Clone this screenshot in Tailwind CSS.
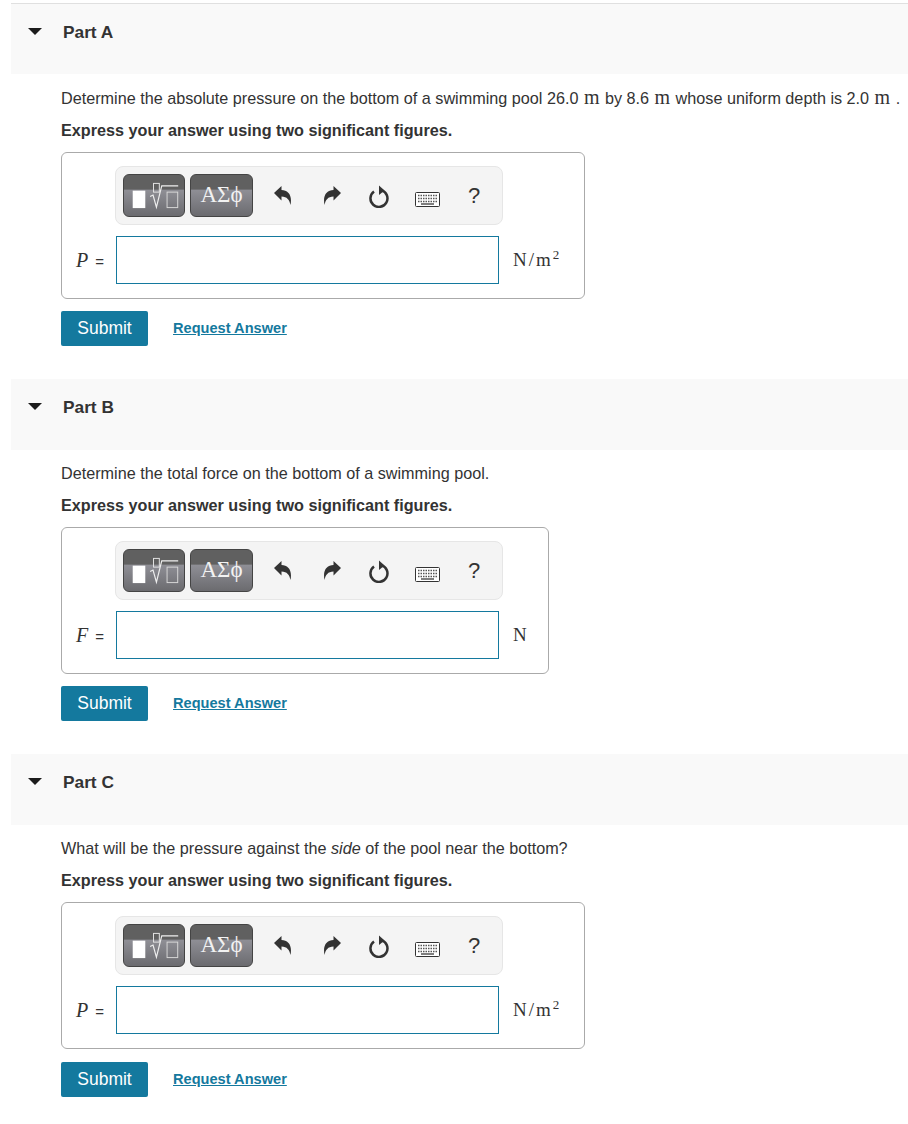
<!DOCTYPE html>
<html lang="en">

<head>
    <meta charset="UTF-8">
    <meta name="viewport" content="width=device-width, initial-scale=1.0">
    <title>Parts</title>
    <script src="https://cdn.jsdelivr.net/npm/@tailwindcss/browser@4"></script>
</head>

<body class="bg-white font-['Liberation_Sans',Arial,sans-serif] text-[#333] text-[16.2px] h-[1124px] overflow-hidden">
    <!-- shared toolbar icons -->
    <svg class="hidden" xmlns="http://www.w3.org/2000/svg">
        <symbol id="templates" viewBox="0 0 62 42">
            <rect x="9" y="16" width="13" height="18" fill="#fff"></rect>
            <rect x="30.500" y="8.500" width="6" height="9" fill="none" stroke="#e4e4e4" stroke-width="1"></rect>
            <path d="M27 22 L30 20.500 L33.500 33 L39 11 L56 11" fill="none" stroke="#eee" stroke-width="1.200"></path>
            <rect x="44.500" y="17.500" width="11" height="16" fill="none" stroke="#d8d8d8" stroke-width="1"></rect>
        </symbol>
        <symbol id="undo" viewBox="0 0 18 19">
            <path d="M0 7 L7.500 0 V4 C14 4 18.500 9 16.500 19 C15.500 14 13 10.500 7.500 10.500 V14.500 Z" fill="#333"></path>
        </symbol>
        <symbol id="redo" viewBox="0 0 18 19">
            <path d="M18 7 L10.500 0 V4 C4 4 -0.500 9 1.500 19 C2.500 14 5 10.500 10.500 10.500 V14.500 Z" fill="#333"></path>
        </symbol>
        <symbol id="reset" viewBox="0 0 21 23">
            <path d="M12.500 5.300 A8.500 8.500 0 1 1 5 6.500" fill="none" stroke="#333" stroke-width="2.500"></path>
            <path d="M10 0.500 L15.500 5.500 L10 10 Z" fill="#333"></path>
        </symbol>
        <symbol id="keyboard" viewBox="0 0 25 15">
            <rect x="0.500" y="0.500" width="24" height="14" rx="1" fill="#fff" stroke="#333"></rect>
            <path d="M3 3.500 H22 M3 6.500 H22" stroke="#555" stroke-width="1.500" stroke-dasharray="1.500 1"></path>
            <path d="M3 9.500 H22" stroke="#555" stroke-width="1.500" stroke-dasharray="1.500 1"></path>
            <path d="M6 12 H19" stroke="#555" stroke-width="1.500"></path>
        </symbol>
    </svg>

    <div class="pt-[3px] pl-[11px]">
        <!-- Part A -->
        <section class="h-[376px] border-t border-[#e0e0e0]">
            <div class="h-[70px] bg-[#f9f9f9] flex items-start pt-[18px]">
                <span class="w-[14px] mt-[6px] ml-[17px] border-x-[7px] border-x-transparent border-t-[7px] border-t-[#1c1c1c]"></span>
                <h2 class="ml-[21px] font-bold text-[17.300px] text-[#333] leading-[20px]">Part A</h2>
            </div>
            <div class="pl-[50px]">
                <p class="mt-[13px] leading-[22px]">Determine the absolute pressure on the bottom of a swimming pool 26.0 <span class="mx-[1px] font-['Liberation_Serif',serif] text-[20px] leading-none">m</span> by 8.6 <span class="mx-[1px] font-['Liberation_Serif',serif] text-[20px] leading-none">m</span> whose uniform depth is 2.0 <span class="mx-[1px] font-['Liberation_Serif',serif] text-[20px] leading-none">m</span> .</p>
                <p class="mt-[10px] font-bold leading-[22px]">Express your answer using two significant figures.</p>
                <div class="mt-[11px] w-[524px] h-[147px] border border-[#aaa] rounded-[6px] pl-[53px] pt-[13px]">
                    <div class="w-[388px] h-[59px] bg-[#f4f4f4] border border-[#e6e6e6] rounded-[8px] flex items-center pl-[7px]">
                        <div class="w-[62px] h-[43px] rounded-[6px] border border-[#444] bg-[linear-gradient(#606060_0,#606060_35%,#8f8f96_36%,#6b6b6f_100%)]">
                            <svg class="w-full h-full"><use href="#templates"></use></svg>
                        </div>
                        <div class="ml-[5px] w-[63px] h-[43px] rounded-[6px] border border-[#444] bg-[linear-gradient(#606060_0,#606060_35%,#8f8f96_36%,#6b6b6f_100%)] flex items-center justify-center font-['Liberation_Serif',serif] text-[23px] text-[#f2f2f2]">ΑΣϕ</div>
                        <svg class="ml-[21px] w-[18px] h-[19px]"><use href="#undo"></use></svg>
                        <svg class="ml-[31px] w-[18px] h-[19px]"><use href="#redo"></use></svg>
                        <svg class="ml-[28px] mt-[2px] w-[21px] h-[23px]"><use href="#reset"></use></svg>
                        <svg class="ml-[25px] mt-[8px] w-[25px] h-[15px]"><use href="#keyboard"></use></svg>
                        <span class="ml-[28px] text-[22px] text-[#333]">?</span>
                    </div>
                    <div class="mt-[11px] -ml-[39px] flex items-center">
                        <span class="w-[40px] font-['Liberation_Serif',serif] text-[20px]"><i>P</i><span class="ml-[7px] font-['Liberation_Sans',sans-serif] text-[15px]">=</span></span>
                        <div class="w-[383px] h-[48px] border border-[#14799e] bg-white"></div>
                        <span class="ml-[14px] font-['Liberation_Serif',serif] text-[19px] tracking-[2px]">N/m<sup class="text-[13px]">2</sup></span>
                    </div>
                </div>
                <div class="mt-[12px] flex items-center">
                    <button class="w-[87px] h-[35px] rounded-[2px] bg-[#14799e] text-white text-[17.500px]">Submit</button>
                    <a href="#" class="ml-[25px] text-[14.600px] font-bold text-[#14799e] underline">Request Answer</a>
                </div>
            </div>
        </section>

        <!-- Part B -->
        <section class="h-[375px]">
            <div class="h-[71px] bg-[#f9f9f9] flex items-start pt-[18px]">
                <span class="w-[14px] mt-[6px] ml-[17px] border-x-[7px] border-x-transparent border-t-[7px] border-t-[#1c1c1c]"></span>
                <h2 class="ml-[21px] font-bold text-[17.300px] text-[#333] leading-[20px]">Part B</h2>
            </div>
            <div class="pl-[50px]">
                <p class="mt-[12px] leading-[22px]">Determine the total force on the bottom of a swimming pool.</p>
                <p class="mt-[10px] font-bold leading-[22px]">Express your answer using two significant figures.</p>
                <div class="mt-[11px] w-[488px] h-[147px] border border-[#aaa] rounded-[6px] pl-[53px] pt-[13px]">
                    <div class="w-[388px] h-[59px] bg-[#f4f4f4] border border-[#e6e6e6] rounded-[8px] flex items-center pl-[7px]">
                        <div class="w-[62px] h-[43px] rounded-[6px] border border-[#444] bg-[linear-gradient(#606060_0,#606060_35%,#8f8f96_36%,#6b6b6f_100%)]">
                            <svg class="w-full h-full"><use href="#templates"></use></svg>
                        </div>
                        <div class="ml-[5px] w-[63px] h-[43px] rounded-[6px] border border-[#444] bg-[linear-gradient(#606060_0,#606060_35%,#8f8f96_36%,#6b6b6f_100%)] flex items-center justify-center font-['Liberation_Serif',serif] text-[23px] text-[#f2f2f2]">ΑΣϕ</div>
                        <svg class="ml-[21px] w-[18px] h-[19px]"><use href="#undo"></use></svg>
                        <svg class="ml-[31px] w-[18px] h-[19px]"><use href="#redo"></use></svg>
                        <svg class="ml-[28px] mt-[2px] w-[21px] h-[23px]"><use href="#reset"></use></svg>
                        <svg class="ml-[25px] mt-[8px] w-[25px] h-[15px]"><use href="#keyboard"></use></svg>
                        <span class="ml-[28px] text-[22px] text-[#333]">?</span>
                    </div>
                    <div class="mt-[11px] -ml-[39px] flex items-center">
                        <span class="w-[40px] font-['Liberation_Serif',serif] text-[20px]"><i>F</i><span class="ml-[7px] font-['Liberation_Sans',sans-serif] text-[15px]">=</span></span>
                        <div class="w-[383px] h-[48px] border border-[#14799e] bg-white"></div>
                        <span class="ml-[14px] font-['Liberation_Serif',serif] text-[19px]">N</span>
                    </div>
                </div>
                <div class="mt-[12px] flex items-center">
                    <button class="w-[87px] h-[35px] rounded-[2px] bg-[#14799e] text-white text-[17.500px]">Submit</button>
                    <a href="#" class="ml-[25px] text-[14.600px] font-bold text-[#14799e] underline">Request Answer</a>
                </div>
            </div>
        </section>

        <!-- Part C -->
        <section>
            <div class="h-[71px] bg-[#f9f9f9] flex items-start pt-[18px]">
                <span class="w-[14px] mt-[6px] ml-[17px] border-x-[7px] border-x-transparent border-t-[7px] border-t-[#1c1c1c]"></span>
                <h2 class="ml-[21px] font-bold text-[17.300px] text-[#333] leading-[20px]">Part C</h2>
            </div>
            <div class="pl-[50px]">
                <p class="mt-[12px] leading-[22px]">What will be the pressure against the <i>side</i> of the pool near the bottom?</p>
                <p class="mt-[10px] font-bold leading-[22px]">Express your answer using two significant figures.</p>
                <div class="mt-[11px] w-[524px] h-[147px] border border-[#aaa] rounded-[6px] pl-[53px] pt-[13px]">
                    <div class="w-[388px] h-[59px] bg-[#f4f4f4] border border-[#e6e6e6] rounded-[8px] flex items-center pl-[7px]">
                        <div class="w-[62px] h-[43px] rounded-[6px] border border-[#444] bg-[linear-gradient(#606060_0,#606060_35%,#8f8f96_36%,#6b6b6f_100%)]">
                            <svg class="w-full h-full"><use href="#templates"></use></svg>
                        </div>
                        <div class="ml-[5px] w-[63px] h-[43px] rounded-[6px] border border-[#444] bg-[linear-gradient(#606060_0,#606060_35%,#8f8f96_36%,#6b6b6f_100%)] flex items-center justify-center font-['Liberation_Serif',serif] text-[23px] text-[#f2f2f2]">ΑΣϕ</div>
                        <svg class="ml-[21px] w-[18px] h-[19px]"><use href="#undo"></use></svg>
                        <svg class="ml-[31px] w-[18px] h-[19px]"><use href="#redo"></use></svg>
                        <svg class="ml-[28px] mt-[2px] w-[21px] h-[23px]"><use href="#reset"></use></svg>
                        <svg class="ml-[25px] mt-[8px] w-[25px] h-[15px]"><use href="#keyboard"></use></svg>
                        <span class="ml-[28px] text-[22px] text-[#333]">?</span>
                    </div>
                    <div class="mt-[11px] -ml-[39px] flex items-center">
                        <span class="w-[40px] font-['Liberation_Serif',serif] text-[20px]"><i>P</i><span class="ml-[7px] font-['Liberation_Sans',sans-serif] text-[15px]">=</span></span>
                        <div class="w-[383px] h-[48px] border border-[#14799e] bg-white"></div>
                        <span class="ml-[14px] font-['Liberation_Serif',serif] text-[19px] tracking-[2px]">N/m<sup class="text-[13px]">2</sup></span>
                    </div>
                </div>
                <div class="mt-[13px] flex items-center">
                    <button class="w-[87px] h-[35px] rounded-[2px] bg-[#14799e] text-white text-[17.500px]">Submit</button>
                    <a href="#" class="ml-[25px] text-[14.600px] font-bold text-[#14799e] underline">Request Answer</a>
                </div>
            </div>
        </section>
    </div>
</body>

</html>
